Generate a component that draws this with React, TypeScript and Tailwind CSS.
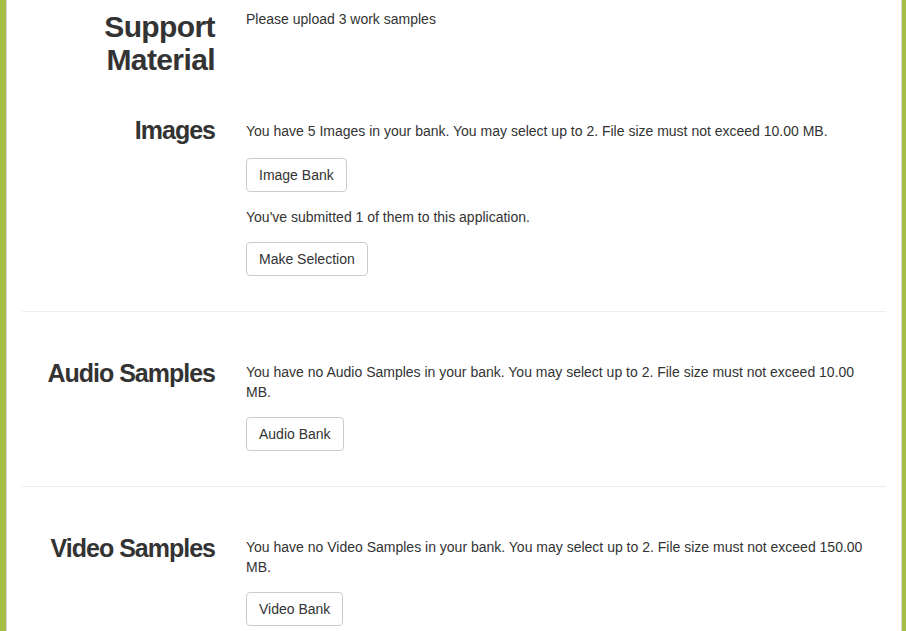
import React from "react";

const font = { fontFamily: '"Liberation Sans", Arial, Helvetica, sans-serif' };

function Btn({ children }: { children: React.ReactNode }) {
  return (
    <button className="inline-block rounded-[4px] border border-[#cccccc] bg-white px-[12px] py-[6px] text-[14px] leading-[20px] text-[#333333]">
      {children}
    </button>
  );
}

function Label({ children }: { children: React.ReactNode }) {
  return (
    <h3 className="text-right text-[25px] font-bold leading-[28px] tracking-[-1px] text-[#333333]">
      {children}
    </h3>
  );
}

export default function App() {
  return (
    <div style={font} className="flex min-h-[631px] bg-[#a3bd45] pl-[6px] pr-[4px] text-[14px] leading-[20px] text-[#333333]">
      <div className="flex-1 border-x border-[#d6d6d6] bg-white px-[15px]">
        {/* Support Material */}
        <div className="flex pt-[9px]">
          <div className="w-[193px] shrink-0">
            <h2 className="mt-[1px] text-right text-[30px] font-bold leading-[33px] tracking-[-0.6px] text-[#333333]">
              Support
              <br />
              Material
            </h2>
          </div>
          <div className="ml-[31px] flex-1 pr-[15px]">
            <p>Please upload 3 work samples</p>
          </div>
        </div>

        {/* Images */}
        <div className="mt-[40px] flex">
          <div className="w-[193px] shrink-0">
            <Label>Images</Label>
          </div>
          <div className="ml-[31px] flex-1 pt-[5px] pr-[15px]">
            <p>You have 5 Images in your bank. You may select up to 2. File size must not exceed 10.00 MB.</p>
            <div className="mt-[17px]">
              <Btn>Image Bank</Btn>
            </div>
            <p className="mt-[15px]">You've submitted 1 of them to this application.</p>
            <div className="mt-[15px]">
              <Btn>Make Selection</Btn>
            </div>
          </div>
        </div>
        <div className="mt-[35px] h-px bg-[#eeeeee]" />

        {/* Audio */}
        <div className="flex pt-[47px]">
          <div className="w-[193px] shrink-0">
            <Label>Audio Samples</Label>
          </div>
          <div className="ml-[31px] flex-1 pt-[3px] pr-[15px]">
            <p>You have no Audio Samples in your bank. You may select up to 2. File size must not exceed 10.00 MB.</p>
            <div className="mt-[15px]">
              <Btn>Audio Bank</Btn>
            </div>
          </div>
        </div>
        <div className="mt-[35px] h-px bg-[#eeeeee]" />

        {/* Video */}
        <div className="flex pt-[47px]">
          <div className="w-[193px] shrink-0">
            <Label>Video Samples</Label>
          </div>
          <div className="ml-[31px] flex-1 pt-[3px] pr-[15px]">
            <p>You have no Video Samples in your bank. You may select up to 2. File size must not exceed 150.00 MB.</p>
            <div className="mt-[15px]">
              <Btn>Video Bank</Btn>
            </div>
          </div>
        </div>
        <div className="h-[20px]" />
      </div>
    </div>
  );
}
